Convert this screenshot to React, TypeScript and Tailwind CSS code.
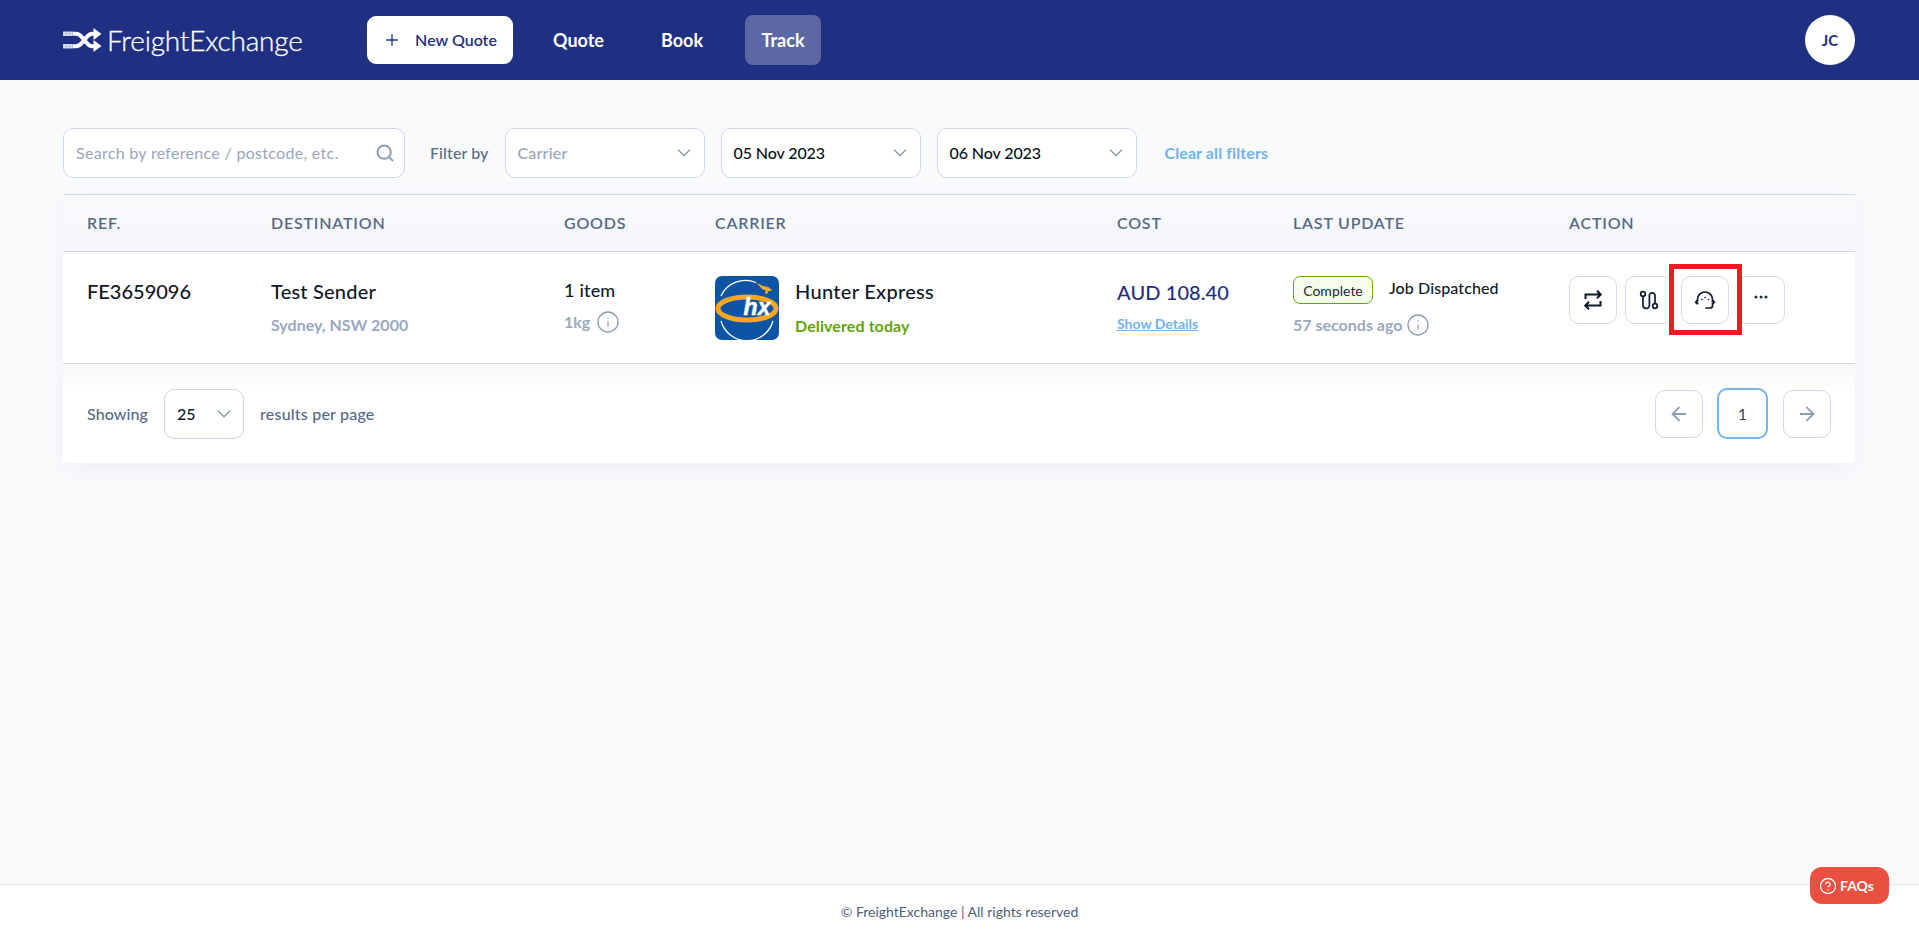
import React from "react";
import { Plus, Search, ChevronDown, ArrowLeft, ArrowRight, Info, CircleHelp } from "lucide-react";

const cols = "grid grid-cols-[184px_293px_151px_402px_176px_276px_1fr] pl-6";

function Logo() {
  return (
    <svg width="39" height="24" viewBox="0 0 39 24" fill="none" className="shrink-0">
      <rect x="0" y="3.500" width="9.500" height="4.500" fill="#d5d9ea" />
      <rect x="0" y="16" width="9.500" height="4.500" fill="#d5d9ea" />
      <path d="M3 5.700h1M6 5.700h1M3 18.200h1M6 18.200h1" stroke="#8f99c4" strokeWidth="1" />
      <path d="M9.500 5.700h3.500c3 0 4.500 1.500 6.500 4l4 5c2 2.500 3.500 3.500 6 3.500h3" stroke="#fff" strokeWidth="4" />
      <path d="M9.500 18.300h3.500c3 0 4.500-1.500 6.500-4l4-5c2-2.500 3.500-3.500 6-3.500h3" stroke="#fff" strokeWidth="4" />
      <path d="M30.500 0l8 6-8 6zM30.500 12l8 6-8 6z" fill="#fff" />
    </svg>
  );
}

function HunterLogo() {
  return (
    <svg width="64" height="64" viewBox="0 0 64 64" className="shrink-0">
      <rect width="64" height="64" rx="7" fill="#0d54a5" />
      <path d="M41 6.500A27 27 0 0 0 6 20" fill="none" stroke="#fff" strokeWidth="1.300" />
      <path d="M6 45a27 27 0 0 0 52 0" fill="none" stroke="#fff" strokeWidth="1.300" />
      <ellipse cx="32" cy="32.500" rx="29" ry="11.500" fill="#0d54a5" stroke="#f6a623" strokeWidth="5" />
      <text x="42" y="39" textAnchor="middle" fill="#fff" stroke="#fff" strokeWidth="0.500" fontFamily="Liberation Sans, sans-serif" fontSize="23" fontWeight="700" fontStyle="italic">hx</text>
      <path d="M41 6.500l7 3.500 5.500 1 4 3.500-4 .5-1.500 3-2-.5.500-3-3.500-1.500-6-6.500z" fill="#f6a623" />
    </svg>
  );
}

function Headset() {
  return (
    <svg width="24" height="24" viewBox="0 0 24 24" fill="none" stroke="#0f172a" strokeWidth="1.700" strokeLinecap="round" strokeLinejoin="round">
      <path d="M4.500 12.500V11.500a7.500 7.500 0 0 1 15 0v1" />
      <path d="M4.300 12.300c-1.200.2-2 1-2 1.900s.8 1.700 2.200 1.900zM19.700 12.300c1.200.2 2 1 2 1.900s-.8 1.700-2.200 1.900z" fill="#0f172a" strokeWidth="1" />
      <path d="M19.500 16.500v1.200c0 1.300-.9 2.300-2.300 2.300H13" />
      <circle cx="8.700" cy="11.500" r=".4" fill="#0f172a" strokeWidth=".7" />
      <circle cx="15.300" cy="11.500" r=".4" fill="#0f172a" strokeWidth=".7" />
      <circle cx="12" cy="9.300" r=".4" fill="#0f172a" strokeWidth=".7" />
    </svg>
  );
}

function ActionBtn({ children }: { children: React.ReactNode }) {
  return (
    <button className="w-12 h-12 rounded-[10px] border border-[#cfd9e8] bg-white flex items-center justify-center">
      {children}
    </button>
  );
}

function Select({ label, muted, width }: { label: string; muted?: boolean; width: string }) {
  return (
    <div className={`${width} h-[50px] bg-white border border-[#cfd8e6] rounded-[10px] flex items-center justify-between pl-3 pr-[9px]`}>
      <span className={`text-[16px] font-medium tracking-[-0.1px] ${muted ? "text-[#98a5bc] tracking-[0.2px]" : "text-[#0b1220]"}`}>{label}</span>
      <ChevronDown size={22} strokeWidth={1.5} className="text-[#8796ae]" />
    </div>
  );
}

export default function App() {
  return (
    <div className="relative min-h-[937px] flex flex-col bg-[#f9fafc] font-['Lato',sans-serif]">
      <header className="h-20 bg-[#1f3083] flex items-center pl-[63px] pr-[64px]">
        <div className="flex items-center gap-[5px] w-[304px]">
          <Logo />
          <span className="text-white text-[28px] font-light tracking-[-0.2px] leading-none [-webkit-text-stroke:0.3px_#fff]">FreightExchange</span>
        </div>
        <button className="w-[146px] h-12 bg-white rounded-[9px] flex items-center justify-center gap-[14px] text-[#1f3083] text-[16px] font-semibold">
          <Plus size={18} strokeWidth={1.8} />
          New Quote
        </button>
        <span className="ml-10 text-white text-[18px] font-bold">Quote</span>
        <span className="ml-[57px] text-white text-[18px] font-bold">Book</span>
        <span className="ml-[42px] w-[76px] h-[50px] bg-[#5c68a4] rounded-[8px] flex items-center justify-center text-white text-[18px] font-bold">Track</span>
        <div className="ml-auto w-[50px] h-[50px] rounded-full bg-white flex items-center justify-center text-[#1f3083] text-[15px] font-bold">JC</div>
      </header>

      <main className="flex-1 pl-[63px] pr-[64px] pt-12">
        <div className="flex items-center h-[50px]">
          <div className="w-[342px] h-[50px] bg-white border border-[#cfd8e6] rounded-[10px] flex items-center justify-between pl-3 pr-[9px]">
            <span className="text-[16px] tracking-[0.3px] text-[#98a5bc]">Search by reference / postcode, etc.</span>
            <Search size={20} strokeWidth={2.4} className="text-[#8f9db5]" />
          </div>
          <span className="ml-[25px] text-[16px] font-medium tracking-[0.1px] text-[#5a6b85]">Filter by</span>
          <div className="ml-4"><Select label="Carrier" muted width="w-[200px]" /></div>
          <div className="ml-4"><Select label="05 Nov 2023" width="w-[200px]" /></div>
          <div className="ml-4"><Select label="06 Nov 2023" width="w-[200px]" /></div>
          <span className="ml-7 text-[16px] font-bold tracking-[0.1px] text-[#6fb3ea]">Clear all filters</span>
        </div>

        <div className="mt-4 border-t border-[#cfd8e6] shadow-[0_6px_24px_rgba(30,50,90,0.05)]">
          <div className={`${cols} h-14 items-center bg-linear-to-b from-[#f9fafc] to-[#f4f6f9] text-[16px] font-semibold tracking-[0.8px] text-[#566a85]`}>
            <span>REF.</span>
            <span>DESTINATION</span>
            <span>GOODS</span>
            <span>CARRIER</span>
            <span>COST</span>
            <span>LAST UPDATE</span>
            <span>ACTION</span>
          </div>
          <div className={`${cols} h-[113px] bg-white border-y border-[#cfd8e6]`}>
            <div className="pt-[26px] text-[20px] font-medium leading-[26px] text-[#101828]">FE3659096</div>
            <div className="pt-[26px]">
              <div className="text-[20px] font-medium leading-[26px] tracking-[0.2px] text-[#101828]">Test Sender</div>
              <div className="mt-[10px] text-[16px] font-bold leading-[22px] text-[#9ba8bf]">Sydney, NSW 2000</div>
            </div>
            <div className="pt-[26px]">
              <div className="text-[18px] font-medium leading-[24px] tracking-[0.2px] text-[#101828]">1 item</div>
              <div className="mt-2 flex items-center gap-[6px] text-[16px] font-bold leading-[22px] text-[#9ba8bf]">
                1kg <Info size={24} strokeWidth={1.3} className="text-[#8d9cb5]" />
              </div>
            </div>
            <div className="pt-6 flex items-start gap-4">
              <HunterLogo />
              <div className="pt-[2px]">
                <div className="text-[20px] font-medium leading-[26px] tracking-[0.3px] text-[#101828]">Hunter Express</div>
                <div className="mt-[11px] text-[16px] font-bold leading-[22px] tracking-[0.1px] text-[#5fa50a]">Delivered today</div>
              </div>
            </div>
            <div className="pt-[26px]">
              <div className="text-[20px] font-medium leading-[28px] tracking-[0.1px] text-[#1f3083]">AUD 108.40</div>
              <div className="mt-[8px] text-[14px] font-bold leading-[20px] text-[#6fb3ea] underline">Show Details</div>
            </div>
            <div className="pt-6">
              <div className="flex items-center gap-4 h-7">
                <span className="w-20 h-7 flex items-center justify-center rounded-[7px] border border-[#66a80f] bg-[#f6fceb] text-[14px] text-[#1f2937]">Complete</span>
                <span className="text-[16px] font-medium tracking-[0.1px] text-[#101828] -mt-[5px]">Job Dispatched</span>
              </div>
              <div className="mt-[9px] flex items-center gap-[4px] text-[16px] font-bold leading-[22px] text-[#9ba8bf]">
                57 seconds ago <Info size={24} strokeWidth={1.3} className="text-[#8d9cb5]" />
              </div>
            </div>
            <div className="pt-6 flex gap-2">
              <ActionBtn>
                <svg width="24" height="24" viewBox="0 0 24 24" fill="none" stroke="#0f172a" strokeWidth="2">
                  <path d="M4.500 11V6.500h15M16 2.800l3.700 3.700-3.700 3.700M19.500 13v4.500h-15M8 13.800l-3.700 3.700 3.700 3.700" />
                </svg>
              </ActionBtn>
              <ActionBtn>
                <svg width="24" height="24" viewBox="0 0 24 24" fill="none" stroke="#0f172a" strokeWidth="1.700">
                  <circle cx="6" cy="6" r="2.300" />
                  <circle cx="18" cy="18" r="2.300" />
                  <path d="M6 8.300v9a3.200 3.200 0 0 0 6.400 0V6.700a3 3 0 0 1 5.600 0v9" />
                </svg>
              </ActionBtn>
              <div className="relative">
                <ActionBtn><Headset /></ActionBtn>
                <div className="absolute -left-3 -top-3 w-[73px] h-[71px] border-[5px] border-[#ed1c24]" />
              </div>
              <ActionBtn>
                <svg width="16" height="16" viewBox="0 0 16 16" fill="#1e293b" className="-mt-[6px]">
                  <circle cx="3" cy="8" r="1.500" /><circle cx="8" cy="8" r="1.500" /><circle cx="13" cy="8" r="1.500" />
                </svg>
              </ActionBtn>
            </div>
          </div>
          <div className="h-[99px] bg-linear-to-b from-[#f6f7f9] to-white to-30% flex items-center pl-6 pr-[24px]">
            <span className="text-[16px] font-medium tracking-[0.1px] text-[#566a85]">Showing</span>
            <div className="ml-4 w-20 h-[50px] bg-white border border-[#cfd8e6] rounded-[10px] flex items-center justify-between pl-3 pr-[8px]">
              <span className="text-[16px] font-medium text-[#101828]">25</span>
              <ChevronDown size={22} strokeWidth={1.5} className="text-[#8796ae]" />
            </div>
            <span className="ml-4 text-[16px] font-medium tracking-[0.2px] text-[#566a85]">results per page</span>
            <div className="ml-auto flex items-center gap-[14px]">
              <div className="w-12 h-12 rounded-[10px] border border-[#cfd8e6] flex items-center justify-center text-[#8e9db6]"><ArrowLeft size={22} strokeWidth={2} /></div>
              <div className="w-[51px] h-[51px] rounded-[10px] border-2 border-[#74b5ec] flex items-center justify-center text-[16px] text-[#334155]">1</div>
              <div className="ml-px w-12 h-12 rounded-[10px] border border-[#cfd8e6] flex items-center justify-center text-[#8e9db6]"><ArrowRight size={22} strokeWidth={2} /></div>
            </div>
          </div>
        </div>
      </main>

      <footer className="h-[53px] bg-white border-t border-[#e3e8f0] flex items-center justify-center">
        <span className="text-[14px] text-[#4f6079]">© FreightExchange | All rights reserved</span>
      </footer>
      <button className="absolute left-[1810px] top-[867px] w-[79px] h-[37px] bg-[#e9503f] rounded-[12px] flex items-center justify-center gap-[3px] text-white text-[14px] font-bold pr-[6px]">
        <CircleHelp size={18} strokeWidth={1.7} /> FAQs
      </button>
    </div>
  );
}
